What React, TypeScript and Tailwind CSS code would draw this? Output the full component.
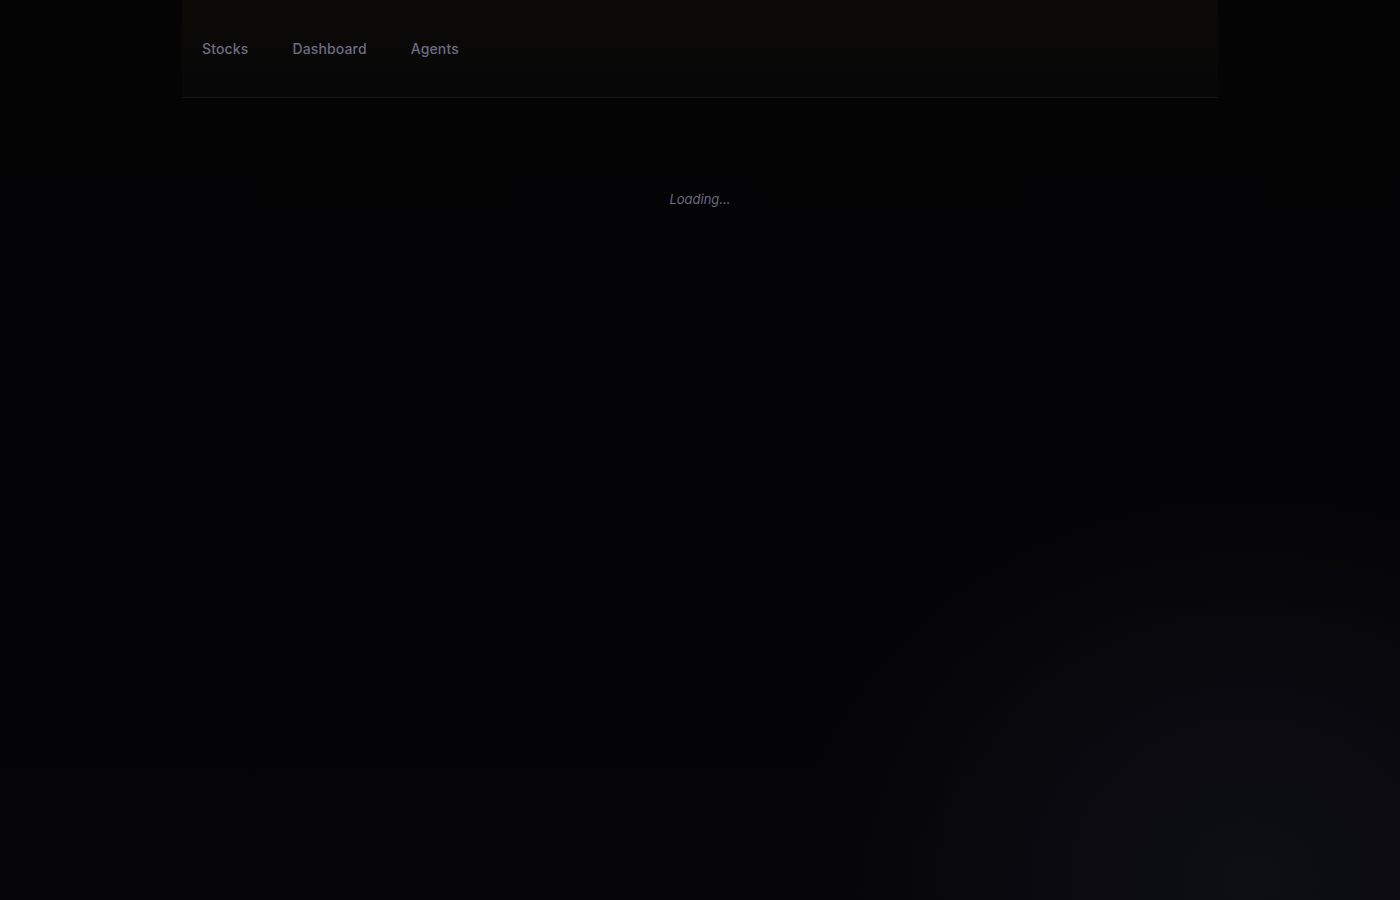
import React from 'react';

const NAV_ITEMS = ['Stocks', 'Dashboard', 'Agents'];

export default function App() {
  return (
    <div
      className="relative min-h-screen overflow-hidden bg-gradient-to-b from-[#040405] via-[#040406] to-[#050508] text-[#6e6e84]"
      style={{ fontFamily: 'Inter, "Noto Sans", sans-serif' }}
    >
      {/* faint glow sitting in the lower right corner */}
      <div className="pointer-events-none absolute -bottom-[380px] -right-[300px] h-[800px] w-[900px] rounded-full bg-[radial-gradient(closest-side,#0e0e15,#0a0a10_45%,transparent)]" />

      <div className="relative mx-auto w-[1036px]">
        <header className="flex h-[98px] items-center gap-11 border-b border-[#16161a] bg-gradient-to-b from-[#0b0a06] to-[#070708] px-5">
          {NAV_ITEMS.map((item) => (
            <a key={item} href="#" className="text-[14px] font-medium tracking-[0.01em] text-[#6c6c82]">
              {item}
            </a>
          ))}
        </header>

        <main className="flex justify-center pt-[92px]">
          <p className="text-[13px] italic text-[#6a6a84]">Loading...</p>
        </main>
      </div>
    </div>
  );
}
